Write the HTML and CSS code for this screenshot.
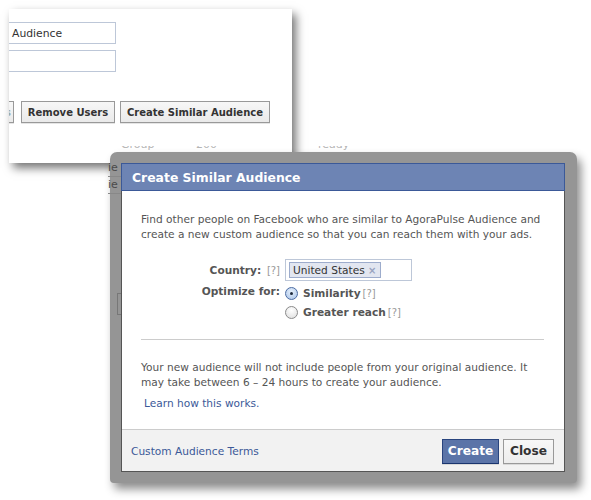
FILE: index.html
```html
<!DOCTYPE html>
<html>
<head>
<meta charset="utf-8">
<link rel="stylesheet" href="styles.css">
</head>
<body>
<div class="canvas">
  <div class="shot1">
    <div class="s1-inner">
      <div class="field"><span>Audience</span></div>
      <div class="field"></div>
      <div class="btnrow">
        <span class="ubtn partial">s</span>
        <span class="ubtn w1">Remove Users</span>
        <span class="ubtn w2">Create Similar Audience</span>
      </div>
    </div>
  </div>

  <div class="under-row">
    <span class="u1">· Group</span>
    <span class="u2">200</span>
    <span class="u3">ready</span>
  </div>

  <div class="frame">
    <div class="ghost">
      <div class="ghost-row">ie</div>
      <div class="ghost-row">ie</div>
      <div class="ghost-btn"></div>
    </div>
    <div class="dialog">
      <div class="dlg-head">Create Similar Audience</div>
      <div class="dlg-body">
        <p class="intro">Find other people on Facebook who are similar to AgoraPulse Audience and<br>create a new custom audience so that you can reach them with your ads.</p>
        <div class="form">
          <div class="lbl">Country: <span class="q">[?]</span></div>
          <div class="ctl">
            <div class="token-input"><span class="token">United States <span class="x">×</span></span></div>
          </div>
          <div class="lbl lbl2">Optimize for:</div>
          <div class="ctl opts">
            <div class="opt"><span class="radio on"></span><span class="otext">Similarity</span> <span class="q">[?]</span></div>
            <div class="opt"><span class="radio"></span><span class="otext">Greater reach</span> <span class="q">[?]</span></div>
          </div>
        </div>
        <div class="sep"></div>
        <p class="note">Your new audience will not include people from your original audience. It<br>may take between 6 – 24 hours to create your audience.</p>
        <a class="learn">Learn how this works.</a>
      </div>
      <div class="dlg-foot">
        <a class="terms">Custom Audience Terms</a>
        <div class="btns">
          <span class="btn primary">Create</span>
          <span class="btn close">Close</span>
        </div>
      </div>
    </div>
  </div>
</div>
</body>
</html>
```
FILE: styles.css
```css
html, body {
  margin: 0;
  padding: 0;
  background: #fff;
}
body {
  font-family: "DejaVu Sans", "Liberation Sans", sans-serif;
  font-size: 10.6px;
  color: #333;
}
.canvas {
  position: relative;
  width: 591px;
  height: 500px;
  overflow: hidden;
  background: #fff;
}

/* first screenshot */
.shot1 {
  position: absolute;
  left: 9px;
  top: 9px;
  width: 283px;
  height: 154px;
  background: #fff;
  overflow: hidden;
  box-shadow: 4px 5px 9px rgba(0,0,0,0.55);
}
.s1-inner {
  margin-left: -2px;
  padding-top: 13px;
  display: flex;
  flex-direction: column;
  gap: 6px;
}
.field {
  width: 109px;
  height: 22px;
  box-sizing: border-box;
  border: 1px solid #bdc7d8;
  display: flex;
  align-items: center;
  padding-left: 4px;
  font-size: 10.8px;
  color: #333;
}
.btnrow {
  margin-top: 23px;
  display: flex;
  gap: 5px;
  margin-left: -2px;
}
.ubtn {
  height: 22px;
  box-sizing: border-box;
  border: 1px solid #999;
  background: linear-gradient(#f7f7f7, #eaeaea);
  box-shadow: 0 1px 0 rgba(0,0,0,0.1);
  display: flex;
  align-items: center;
  justify-content: center;
  font-weight: bold;
  font-size: 10px;
  color: #333;
  white-space: nowrap;
}
.ubtn.partial {
  color: #9aa;
  width: 9px;
  margin-right: 2px;
  justify-content: flex-end;
  padding-right: 2px;
  overflow: hidden;
}
.ubtn.w1 { width: 94px; }
.ubtn.w2 { width: 150px; }

/* underlying fragments */
.under-row {
  position: absolute;
  left: 108px;
  top: 146px;
  width: 250px;
  height: 6px;
  overflow: hidden;
  color: #b5b5b5;
  font-size: 11px;
}
.under-row span {
  position: absolute;
  top: -8px;
}
.u1 { left: 6px; }
.u2 { left: 88px; }
.u3 { left: 210px; }

/* second screenshot: dialog */
.frame {
  position: absolute;
  left: 110px;
  top: 152px;
  width: 467px;
  height: 331px;
  border-radius: 7px 7px 4px 4px;
  background: #959595;
  box-shadow: 4px 6px 10px rgba(0,0,0,0.45);
  box-sizing: border-box;
  padding: 11px 12px 11px 11px;
}
.ghost {
  position: absolute;
  left: -2px;
  top: 8px;
  width: 13px;
  color: #4a4a4a;
  font-size: 11px;
  overflow: hidden;
}
.ghost-row {
  height: 16px;
  line-height: 16px;
  border-bottom: 1px solid #888;
  overflow: hidden;
}
.ghost-btn {
  position: absolute;
  top: 133px;
  left: 9px;
  width: 4px;
  height: 20px;
  border: 1px solid #777;
  border-right: none;
}
.ghost {
  height: 160px;
}
.dialog {
  position: relative;
  height: 100%;
  background: #fff;
  border: 1px solid #555;
  border-top: none;
  box-sizing: border-box;
  display: flex;
  flex-direction: column;
}
.dlg-head {
  height: 28px;
  margin: 0 -1px;
  background: #6d84b4;
  border: 1px solid #3b5998;
  box-sizing: border-box;
  color: #fff;
  font-weight: bold;
  font-size: 12.4px;
  display: flex;
  align-items: center;
  padding-left: 10px;
}
.dlg-body {
  flex: 1;
  padding: 21px 20px 0 19px;
  color: #555;
}
.intro, .note {
  margin: 0;
  line-height: 15px;
}
.form {
  display: grid;
  grid-template-columns: 139px auto;
  column-gap: 5px;
  margin-top: 17px;
  align-items: center;
}
.lbl {
  text-align: right;
  font-weight: bold;
  color: #555;
  white-space: nowrap;
}
.lbl2 {
  align-self: start;
  padding-top: 4px;
}
.q {
  font-weight: normal;
  color: #999;
  font-size: 10px;
  margin-left: 2px;
}
.token-input {
  width: 122px;
  height: 20px;
  border: 1px solid #bdc7d8;
  display: flex;
  align-items: center;
  padding-left: 3px;
}
.token {
  height: 14px;
  background: #e2e6f0;
  border: 1px solid #9daccc;
  display: flex;
  align-items: center;
  padding: 0 3px 0 3px;
  color: #333;
  white-space: pre;
}
.token .x {
  color: #98a3bf;
  font-size: 10px;
  font-weight: bold;
}
.opts {
  display: flex;
  flex-direction: column;
  gap: 3px;
  padding-top: 4px;
}
.opt {
  display: flex;
  align-items: center;
  height: 16px;
  white-space: pre;
}
.otext {
  font-weight: bold;
  color: #555;
  margin-left: 5px;
}
.radio {
  width: 13px;
  height: 13px;
  border-radius: 50%;
  border: 1px solid #8a8a8a;
  background: radial-gradient(circle at 50% 30%, #fff, #ddd);
  box-sizing: border-box;
  position: relative;
  flex: none;
}
.radio.on {
  border-color: #4c6ca3;
  background: radial-gradient(circle at 50% 35%, #e6f0fb, #a9c3e8);
}
.radio.on::after {
  content: "";
  position: absolute;
  left: 4px;
  top: 4px;
  width: 3px;
  height: 3px;
  border-radius: 50%;
  background: #1e2a3d;
}
.sep {
  height: 1px;
  background: #ccc;
  margin: 19px 0 20px 0;
}
.learn {
  display: block;
  margin: 6px 0 0 3px;
  color: #3b5998;
  line-height: 15px;
}
.dlg-foot {
  height: 41px;
  border-top: 1px solid #ccc;
  background: #f2f2f2;
  display: flex;
  align-items: center;
  justify-content: space-between;
  padding: 0 10px 0 9px;
}
.terms {
  color: #3b5998;
}
.btns {
  display: flex;
  gap: 4px;
  margin-top: 1px;
}
.btn {
  height: 25px;
  box-sizing: border-box;
  border: 1px solid #999;
  background: linear-gradient(#f8f8f8, #ececec);
  display: flex;
  align-items: center;
  justify-content: center;
  font-weight: bold;
  font-size: 12.2px;
  color: #333;
  box-shadow: 0 1px 0 rgba(0,0,0,0.1);
}
.btn.primary {
  width: 57px;
  background: #5b74a8;
  border-color: #29447e #29447e #1a356e;
  color: #fff;
}
.btn.close {
  width: 51px;
}
```
